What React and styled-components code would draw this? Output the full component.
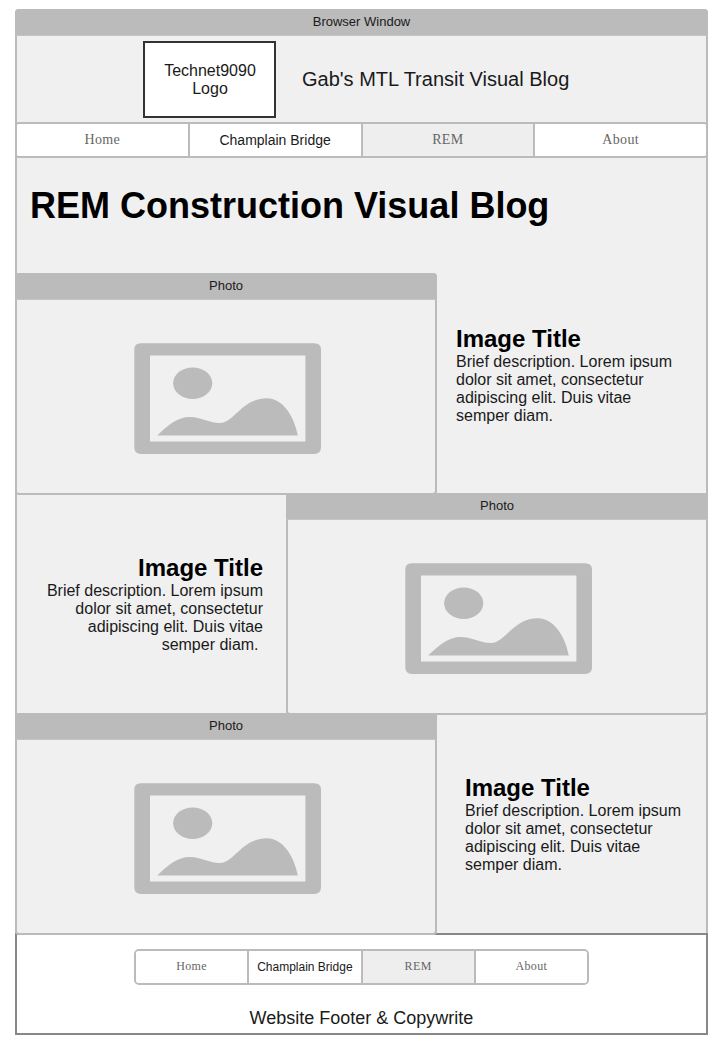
import React from "react";
import styled, { createGlobalStyle } from "styled-components";

const line = "#bbbbbb";
const surface = "#f0f0f0";
const ink = "#1a1a1a";

const GlobalStyle = createGlobalStyle`
  *, *::before, *::after { box-sizing: border-box; }
  body {
    margin: 0;
    background: #ffffff;
    color: ${ink};
    font-family: "Liberation Sans", Arial, sans-serif;
  }
  h1, h2, p { margin: 0; }
`;

const Page = styled.div`
  width: 717px;
  height: 1039px;
  padding: 9px 9px 0 15px;
  overflow: hidden;
`;

const BrowserWindow = styled.main`
  width: 693px;
  height: 926px;
  display: flex;
  flex-direction: column;
  background: ${surface};
  border-radius: 4px 4px 0 0;
  box-shadow: inset 2px 0 0 ${line}, inset -2px 0 0 ${line};
`;

const TitleBar = styled.div`
  height: 27px;
  flex: none;
  display: flex;
  justify-content: center;
  padding-top: 5px;
  background: ${line};
  border-bottom: 1px solid #c4c4c4;
  border-radius: 4px 4px 0 0;
  font-size: 13px;
  line-height: 15px;
`;

const Header = styled.header`
  height: 86px;
  flex: none;
  display: flex;
  align-items: flex-start;
  padding: 5px 0 0 128px;
`;

const Logo = styled.div`
  width: 133px;
  height: 77px;
  display: flex;
  align-items: center;
  justify-content: center;
  padding-left: 1px;
  border: 2px solid #333333;
  background: #ffffff;
  font-size: 16px;
  line-height: 18px;
  text-align: center;
`;

const SiteName = styled.div`
  margin: 27px 0 0 26px;
  font-size: 20px;
  line-height: 22px;
  white-space: nowrap;
`;

const Nav = styled.nav`
  flex: none;
  display: flex;
  width: ${(p) => (p.$compact ? "455px" : "693px")};
  height: 36px;
  border: 2px solid ${line};
  border-radius: ${(p) => (p.$compact ? "5px" : "4px")};
  background: #ffffff;
  overflow: hidden;
  font-size: ${(p) => (p.$compact ? "12px" : "14px")};
`;

const NavItem = styled.div`
  flex: 1 1 0;
  display: flex;
  align-items: center;
  justify-content: center;
  white-space: nowrap;
  padding-bottom: 1px;
  font-family: "Liberation Serif", "Times New Roman", serif;
  letter-spacing: 0.35px;
  color: #666666;
  background: ${(p) => (p.$active ? "#eeeeee" : "#ffffff")};

  & + & { border-left: 2px solid ${line}; }

  ${(p) =>
    p.$visited &&
    `
    font-family: "Liberation Sans", Arial, sans-serif;
    letter-spacing: 0;
    color: ${ink};
  `}
`;

const Heading = styled.h1`
  height: 115px;
  flex: none;
  padding: 27px 0 0 15px;
  color: #000000;
  font-size: 36px;
  line-height: 41px;
  white-space: nowrap;
`;

const Row = styled.section`
  height: 222px;
  flex: none;
  display: flex;
  flex-direction: ${(p) => (p.$reverse ? "row-reverse" : "row")};

  & + & { margin-top: -2px; }
`;

const PhotoFrame = styled.div`
  position: relative;
  z-index: 1;
  width: 422px;
  height: 222px;
  flex: none;
  border: 2px solid ${line};
  border-top: 0;
  border-radius: 4px;
  background: ${surface};

  ${TitleBar} { margin: 0 -2px; }
`;

const Picture = styled.svg`
  display: block;
  width: 187px;
  height: 111px;
  margin: 43px 0 0 117px;
`;

const Caption = styled.div`
  width: 271px;
  padding: ${(p) => p.$pad};
  text-align: ${(p) => p.$align || "left"};
`;

const CaptionTitle = styled.h2`
  padding-bottom: 1px;
  color: #000000;
  font-size: 24px;
  line-height: 26px;
`;

const CaptionText = styled.p`
  font-size: 16px;
  line-height: 18px;
  white-space: pre;
`;

const Footer = styled.footer`
  width: 693px;
  height: 102px;
  margin-top: -2px;
  display: flex;
  flex-direction: column;
  align-items: center;
  padding-top: 14px;
  border: 2px solid #888888;
  background: #ffffff;
`;

const FooterText = styled.div`
  margin-top: 23px;
  font-size: 18px;
  line-height: 21px;
`;

function Menu({ compact }) {
  return (
    <Nav $compact={compact}>
      <NavItem>Home</NavItem>
      <NavItem $visited>Champlain Bridge</NavItem>
      <NavItem $active>REM</NavItem>
      <NavItem>About</NavItem>
    </Nav>
  );
}

function Photo() {
  return (
    <PhotoFrame>
      <TitleBar>Photo</TitleBar>
      <Picture viewBox="0 0 187 111" fill={line} aria-hidden="true">
        <path
          fillRule="evenodd"
          d="M7 0.3H180Q187 0.3 187 6.5V104.5Q187 111 180 111H7Q0.3 111 0.3 104.5V6.5Q0.3 0.3 7 0.3ZM16 12.5V98.5H171.4V12.5Z"
        />
        <ellipse cx="58.7" cy="40.2" rx="19.6" ry="15.7" />
        <path d="M23.2 92.6C34 82 44 74 55.5 74C68 74 74 80 86 80C100 80 108 55.3 133 55.3C148 55.3 160 72 163.8 92.6Z" />
      </Picture>
    </PhotoFrame>
  );
}

const description = [
  "Brief description. Lorem ipsum",
  "dolor sit amet, consectetur",
  "adipiscing elit. Duis vitae",
];

function Entry({ reverse, pad, ending = "semper diam." }) {
  return (
    <Row $reverse={reverse}>
      <Photo />
      <Caption $pad={pad} $align={reverse ? "right" : "left"}>
        <CaptionTitle>Image Title</CaptionTitle>
        <CaptionText>{[...description, ending].join("\n")}</CaptionText>
      </Caption>
    </Row>
  );
}

export default function App() {
  return (
    <>
      <GlobalStyle />
      <Page>
        <BrowserWindow>
          <TitleBar>Browser Window</TitleBar>
          <Header>
            <Logo>
              Technet9090
              <br />
              Logo
            </Logo>
            <SiteName>Gab's MTL Transit Visual Blog</SiteName>
          </Header>
          <Menu />
          <Heading>REM Construction Visual Blog</Heading>
          <Entry pad="53px 0 0 19px" />
          <Entry reverse pad="62px 23px 0 0" ending={"semper diam.\u00a0"} />
          <Entry pad="62px 0 0 28px" />
        </BrowserWindow>
        <Footer>
          <Menu compact />
          <FooterText>Website Footer &amp; Copywrite</FooterText>
        </Footer>
      </Page>
    </>
  );
}
